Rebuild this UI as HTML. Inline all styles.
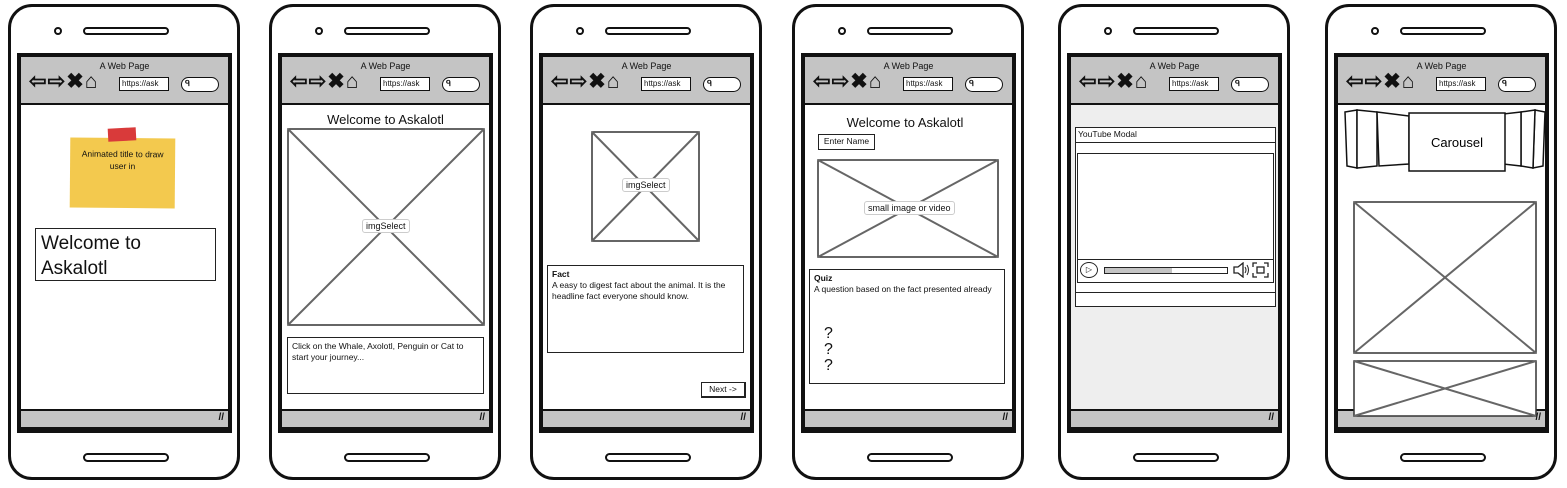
<!DOCTYPE html>
<html><head><meta charset="utf-8"><style>
*{margin:0;padding:0;box-sizing:border-box}
body{width:1567px;height:488px;background:#fff;position:relative;overflow:hidden;font-family:"Liberation Sans",sans-serif;color:#111}
.ph{position:absolute;top:4px;width:232px;height:476px;border:3px solid #111;border-radius:24px;background:#fff}
.cam{position:absolute;left:43px;top:20px;width:8px;height:8px;border:2px solid #111;border-radius:50%}
.spk{position:absolute;left:72px;top:20px;width:86px;height:8px;border:2px solid #111;border-radius:5px}
.hb{position:absolute;left:72px;top:446px;width:86px;height:9px;border:2px solid #111;border-radius:5px}
.scr{position:absolute;left:6px;top:46px;width:215px;height:380px;border:4px solid #111;border-bottom-width:6px;background:#fff}
.tb{position:absolute;left:0;top:0;right:0;height:48px;background:#c4c4c4;border-bottom:2px solid #111}
.tb .t{position:absolute;top:4px;left:0;right:0;text-align:center;font-size:9px}
.tb .ic{position:absolute;top:12px;left:8px;font-size:21px;letter-spacing:1px;font-weight:bold}
.url{position:absolute;left:98px;top:20px;width:50px;height:14px;border:1.5px solid #111;background:#fff;font-size:8px;padding-left:2px;line-height:11px}
.srch{position:absolute;left:160px;top:20px;width:38px;height:15px;border:1.5px solid #111;border-radius:8px;background:#fff;font-size:8px;padding-left:3px;line-height:12px;font-weight:bold}
.bb{position:absolute;left:0;right:0;bottom:0;height:18px;background:#c4c4c4;border-top:2px solid #111}
.bb:after{content:"//";position:absolute;right:4px;top:1px;font-size:10px;font-weight:bold}
.a{position:absolute}
.box{position:absolute;border:1.5px solid #222;background:#fff}
.x{position:absolute}
.lbl{position:absolute;font-size:9px;background:#fff;border:1px solid #ccc;border-radius:3px;padding:1px 3px}
</style></head><body>

<div class="ph" style="left:8px"><div class="cam"></div><div class="spk"></div><div class="hb"></div><div class="scr"><div class="tb"><div class="t">A Web Page</div><div class="ic">⇦⇨✖⌂</div><div class="url">https://ask</div><div class="srch">ᑫ</div></div><div class="bb"></div></div></div>
<div class="ph" style="left:269px"><div class="cam"></div><div class="spk"></div><div class="hb"></div><div class="scr"><div class="tb"><div class="t">A Web Page</div><div class="ic">⇦⇨✖⌂</div><div class="url">https://ask</div><div class="srch">ᑫ</div></div><div class="bb"></div></div></div>
<div class="ph" style="left:530px"><div class="cam"></div><div class="spk"></div><div class="hb"></div><div class="scr"><div class="tb"><div class="t">A Web Page</div><div class="ic">⇦⇨✖⌂</div><div class="url">https://ask</div><div class="srch">ᑫ</div></div><div class="bb"></div></div></div>
<div class="ph" style="left:792px"><div class="cam"></div><div class="spk"></div><div class="hb"></div><div class="scr"><div class="tb"><div class="t">A Web Page</div><div class="ic">⇦⇨✖⌂</div><div class="url">https://ask</div><div class="srch">ᑫ</div></div><div class="bb"></div></div></div>
<div class="ph" style="left:1058px"><div class="cam"></div><div class="spk"></div><div class="hb"></div><div class="scr" style="background:#eee"><div class="tb"><div class="t">A Web Page</div><div class="ic">⇦⇨✖⌂</div><div class="url">https://ask</div><div class="srch">ᑫ</div></div><div class="bb"></div></div></div>
<div class="ph" style="left:1325px"><div class="cam"></div><div class="spk"></div><div class="hb"></div><div class="scr"><div class="tb"><div class="t">A Web Page</div><div class="ic">⇦⇨✖⌂</div><div class="url">https://ask</div><div class="srch">ᑫ</div></div><div class="bb"></div></div></div>

<div class="a" style="left:70px;top:138px;width:105px;height:70px;background:#f3c94e;transform:rotate(0.5deg);font-size:8.5px;text-align:center;padding-top:10px;line-height:12px">Animated title to draw<br>user in</div>
<div class="a" style="left:108px;top:128px;width:28px;height:13px;background:#d93a3a;transform:rotate(-3deg)"></div>
<div class="box" style="left:35px;top:228px;width:181px;height:53px;font-size:19px;line-height:25px;padding:2px 5px">Welcome to<br>Askalotl</div>

<div class="a" style="left:287px;top:112px;width:197px;text-align:center;font-size:13px">Welcome to Askalotl</div>
<svg class="x" style="left:287px;top:128px" width="198" height="198"><rect x="1" y="1" width="196" height="196" fill="#fff" stroke="#333" stroke-width="1.5"/><line x1="1" y1="1" x2="197" y2="197" stroke="#666" stroke-width="2"/><line x1="197" y1="1" x2="1" y2="197" stroke="#666" stroke-width="2"/></svg>
<div class="lbl" style="left:362px;top:219px">imgSelect</div>
<div class="box" style="left:287px;top:337px;width:197px;height:57px;font-size:8.5px;padding:3px 4px;line-height:11px">Click on the Whale, Axolotl, Penguin or Cat to start your journey...</div>

<svg class="x" style="left:591px;top:131px" width="109" height="111"><rect x="1" y="1" width="107" height="109" fill="#fff" stroke="#333" stroke-width="1.5"/><line x1="1" y1="1" x2="108" y2="110" stroke="#666" stroke-width="2"/><line x1="108" y1="1" x2="1" y2="110" stroke="#666" stroke-width="2"/></svg>
<div class="lbl" style="left:622px;top:178px">imgSelect</div>
<div class="box" style="left:547px;top:265px;width:197px;height:88px;font-size:8.5px;padding:3px 4px;line-height:11px"><b>Fact</b><br>A easy to digest fact about the animal. It is the headline fact everyone should know.</div>
<div class="box" style="left:701px;top:382px;width:45px;height:16px;font-size:8.5px;text-align:center;line-height:13px;border-width:1.5px 2px 2px 1.5px">Next -&gt;</div>

<div class="a" style="left:810px;top:115px;width:190px;text-align:center;font-size:13px">Welcome to Askalotl</div>
<div class="box" style="left:818px;top:134px;width:57px;height:16px;font-size:8.5px;text-align:center;line-height:13px">Enter Name</div>
<svg class="x" style="left:817px;top:159px" width="182" height="99"><rect x="1" y="1" width="180" height="97" fill="#fff" stroke="#333" stroke-width="1.5"/><line x1="1" y1="1" x2="181" y2="98" stroke="#666" stroke-width="2"/><line x1="181" y1="1" x2="1" y2="98" stroke="#666" stroke-width="2"/></svg>
<div class="lbl" style="left:864px;top:201px">small image or video</div>
<div class="box" style="left:809px;top:269px;width:196px;height:115px;font-size:8.5px;padding:3px 4px;line-height:11px"><b>Quiz</b><br>A question based on the fact presented already</div>
<div class="a" style="left:824px;top:326px;font-size:16px;line-height:16px">?<br>?<br>?</div>

<div class="box" style="left:1075px;top:127px;width:201px;height:180px;background:#fff"></div>
<div class="a" style="left:1075px;top:142px;width:201px;border-top:1.5px solid #222"></div>
<div class="a" style="left:1078px;top:129px;font-size:8.5px">YouTube Modal</div>
<div class="box" style="left:1077px;top:153px;width:197px;height:130px"></div>
<div class="a" style="left:1077px;top:259px;width:197px;border-top:1.5px solid #222"></div>
<div class="a" style="left:1080px;top:262px;width:18px;height:16px;border:1.5px solid #222;border-radius:50%;font-size:8px;text-align:center;line-height:13px">▷</div>
<div class="a" style="left:1104px;top:267px;width:124px;height:7px;border:1.5px solid #222;background:linear-gradient(90deg,#c4c4c4 55%,#fff 55%)"></div>
<svg class="x" style="left:1232px;top:262px" width="18" height="16"><path d="M2 5h4l5-4v14l-5-4H2z" fill="#fff" stroke="#222" stroke-width="1.3"/><path d="M13 5q2 3 0 6M15 3q3 5 0 10" fill="none" stroke="#222" stroke-width="1"/></svg>
<svg class="x" style="left:1252px;top:262px" width="17" height="16"><path d="M1 5V1h4M12 1h4v4M16 11v4h-4M5 15H1v-4" fill="none" stroke="#222" stroke-width="1.3"/><rect x="5" y="5" width="7" height="6" fill="none" stroke="#222" stroke-width="1.3"/></svg>
<div class="a" style="left:1075px;top:292px;width:201px;border-top:1.5px solid #222"></div>

<svg class="x" style="left:1343px;top:108px" width="204" height="66">
<g fill="#fff" stroke="#111" stroke-width="1.5">
<polygon points="2,4 14,2 14,60 4,58"/><polygon points="14,2 34,4 34,58 14,60"/><polygon points="34,4 66,8 66,56 36,58"/>
<polygon points="202,4 192,2 190,60 200,58"/><polygon points="192,2 178,4 178,58 190,60"/><polygon points="178,4 160,6 160,56 178,58"/>
<rect x="66" y="5" width="96" height="58"/></g>
<text x="114" y="39" font-size="13" text-anchor="middle" font-family="Liberation Sans">Carousel</text></svg>
<svg class="x" style="left:1353px;top:201px" width="184" height="153"><rect x="1" y="1" width="182" height="151" fill="#fff" stroke="#333" stroke-width="1.5"/><line x1="1" y1="1" x2="183" y2="152" stroke="#666" stroke-width="2"/><line x1="183" y1="1" x2="1" y2="152" stroke="#666" stroke-width="2"/></svg>
<svg class="x" style="left:1353px;top:360px" width="184" height="57"><rect x="1" y="1" width="182" height="55" fill="#fff" stroke="#333" stroke-width="1.5"/><line x1="1" y1="1" x2="183" y2="56" stroke="#666" stroke-width="2"/><line x1="183" y1="1" x2="1" y2="56" stroke="#666" stroke-width="2"/></svg>

</body></html>
